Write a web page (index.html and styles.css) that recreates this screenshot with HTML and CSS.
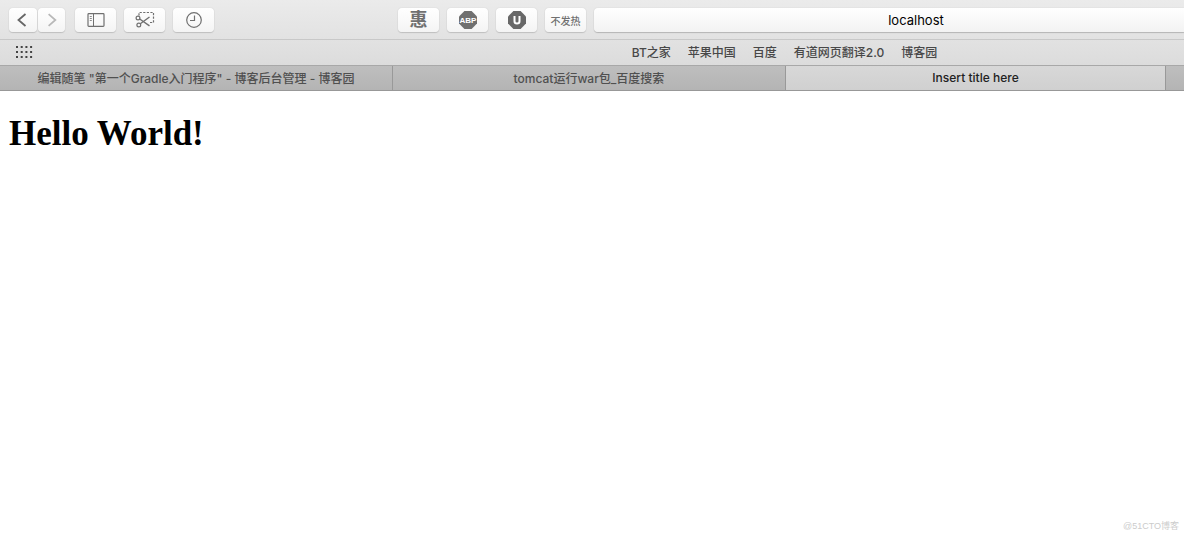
FILE: index.html
```html
<!DOCTYPE html>
<html lang="zh-CN">
<head>
<meta charset="utf-8">
<title>Insert title here</title>
<link rel="stylesheet" href="styles.css">
</head>
<body>
<header class="chrome">
  <div class="toolbar">
    <div class="group nav">
      <button class="btn btn-nav" aria-label="Back"><svg width="28" height="24" viewBox="0 0 28 24"><path d="M16.500 6L9.500 12L16.500 18" fill="none" stroke="#666" stroke-width="1.800"/></svg></button>
      <button class="btn btn-nav" aria-label="Forward"><svg width="28" height="24" viewBox="0 0 28 24"><path d="M11 6L18 12L11 18" fill="none" stroke="#b8b8b8" stroke-width="1.800"/></svg></button>
    </div>
    <div class="group tools">
      <button class="btn" aria-label="Sidebar"><svg width="18" height="14" viewBox="0 0 18 14" fill="none" stroke="#707070"><rect x="1" y=".7" width="16" height="12.600" rx=".8" stroke-width="1.200"/><path d="M6.500 1v12"/><path d="M2.800 3.500h2M2.800 5.500h2M2.800 7.500h2" stroke-width=".8"/></svg></button>
      <button class="btn" aria-label="Clip"><svg width="20" height="18" viewBox="0 0 20 18" fill="none" stroke="#707070"><path d="M4 4.500V1.500H18.500V11.500H14" stroke-dasharray="2.200 1.400" stroke-width="1.200"/><circle cx="3" cy="7" r="1.900" stroke-width="1.200"/><circle cx="3.800" cy="14" r="1.900" stroke-width="1.200"/><path d="M4.700 8L14.500 14.800M5.300 12.700L14.500 6" stroke-width="1.400"/></svg></button>
      <button class="btn" aria-label="History"><svg width="18" height="18" viewBox="0 0 18 18" fill="none" stroke="#707070" stroke-width="1.200"><circle cx="9" cy="9" r="7.300"/><path d="M9.500 4.500V9.500H5"/></svg></button>
    </div>
    <div class="group extensions">
      <button class="btn word">惠</button>
      <button class="btn" aria-label="ABP"><svg width="18" height="18" viewBox="0 0 18 18"><path d="M5.400 0h7.200L18 5.400v7.200L12.600 18H5.400L0 12.600V5.400z" fill="#707070"/><text x="9" y="12" class="abp">ABP</text></svg></button>
      <button class="btn" aria-label="U"><svg width="18" height="18" viewBox="0 0 18 18"><path d="M5.400 0h7.200L18 5.400v7.200L12.600 18H5.400L0 12.600V5.400z" fill="#686868"/><path d="M6.500 5v5.300q0 2.200 2.500 2.200t2.500-2.200V5" fill="none" stroke="#fff" stroke-width="2"/></svg></button>
      <button class="btn tiny">不发热</button>
    </div>
    <input class="address" type="text" value="localhost" aria-label="Address">
  </div>
  <nav class="bookmarks">
    <button class="grid-btn" aria-label="Top sites"><svg width="17" height="12" viewBox="0 0 17 12"><path d="M0 1h17M0 6h17M0 11h17" stroke="#444" stroke-width="2" stroke-dasharray="2 2.700"/></svg></button>
    <div class="links">
      <a href="#">BT之家</a><a href="#">苹果中国</a><a href="#">百度</a><a href="#">有道网页翻译2.0</a><a href="#">博客园</a>
    </div>
  </nav>
  <div class="tabs" role="tablist">
    <button class="tab wide" role="tab">编辑随笔 "第一个Gradle入门程序" - 博客后台管理 - 博客园</button>
    <button class="tab wide" role="tab">tomcat运行war包_百度搜索</button>
    <button class="tab active" role="tab" aria-selected="true">Insert title here</button>
    <div class="tab-end"></div>
  </div>
</header>
<main class="page">
  <h1>Hello World!</h1>
</main>
<footer class="watermark">@51CTO博客</footer>
</body>
</html>
```

FILE: styles.css
```css
* { box-sizing: border-box; }
body {
  margin: 0;
  min-height: 100vh;
  display: flex;
  flex-direction: column;
  background: #fff;
  font-family: Inter, "Noto Sans CJK SC", sans-serif;
  font-size: 12px;
}
button, input { font: inherit; margin: 0; }
.chrome { background: linear-gradient(#ebebeb, #d6d6d6); }
.toolbar {
  display: flex;
  height: 40px;
  padding: 8px 0 7px 9px;
  border-bottom: 1px solid #c8c8c8;
}
.group { display: flex; gap: 8px; }
.nav { gap: 1px; margin-right: 10px; }
.extensions { margin: 0 8px 0 184px; }
.btn {
  display: flex;
  align-items: center;
  justify-content: center;
  width: 41px;
  height: 24px;
  padding: 0;
  border: 0;
  border-radius: 4px;
  background: linear-gradient(#fff, #f4f4f4);
  box-shadow: 0 0 1px #bbb, 0 1px 1px #c0c0c0;
  color: #707070;
}
.btn-nav { width: 28px; }
.nav .btn:last-child { width: 27px; }
.word { font-size: 18px; font-weight: 700; line-height: 24px; }
.tiny { font-size: 10px; font-weight: 500; }
.abp {
  font: 700 8px "Liberation Sans", sans-serif;
  fill: #fff;
  text-anchor: middle;
}
.address {
  flex: 1;
  min-width: 0;
  height: 24px;
  padding: 0 0 0 54px;
  border: 0;
  border-radius: 4px 0 0 4px;
  background: linear-gradient(#fff, #f3f3f3);
  box-shadow: 0 0 1px #bbb, 0 1px 1px #b5b5b5;
  color: #000;
  font-size: 13px;
  text-align: center;
}
.bookmarks {
  display: flex;
  align-items: center;
  height: 25px;
  padding: 0 0 2px 16px;
}
.grid-btn { display: flex; padding: 0; border: 0; background: none; }
.links {
  flex: 1;
  display: flex;
  justify-content: center;
  gap: 17px;
  padding-left: 352px;
}
.links a { color: #484848; text-decoration: none; white-space: nowrap; font-weight: 500; }
.tabs {
  display: flex;
  height: 26px;
  border-top: 1px solid #a8a8a8;
  border-bottom: 1px solid #989898;
  background: linear-gradient(#bebebe, #b4b4b4);
}
.tab {
  flex: 380 1 0;
  min-width: 0;
  padding: 0 0 2px;
  overflow: hidden;
  border: 0;
  border-right: 1px solid #999;
  background: none;
  color: #505050;
  font-weight: 500;
  white-space: nowrap;
}
.wide { flex-grow: 393; }
.active { background: linear-gradient(#d8d8d8, #d0d0d0); color: #222; }
.tab-end { flex: 18 1 0; }
.page { flex: 1; padding: 0 9px; }
.page h1 {
  margin: 22px 0;
  font: 700 35px/42px "Liberation Serif", serif;
  color: #000;
}
.watermark {
  padding: 0 5px 4px;
  color: #ccc;
  font: 9px/12px "Liberation Sans", "Noto Sans CJK SC", sans-serif;
  text-align: right;
}
```
